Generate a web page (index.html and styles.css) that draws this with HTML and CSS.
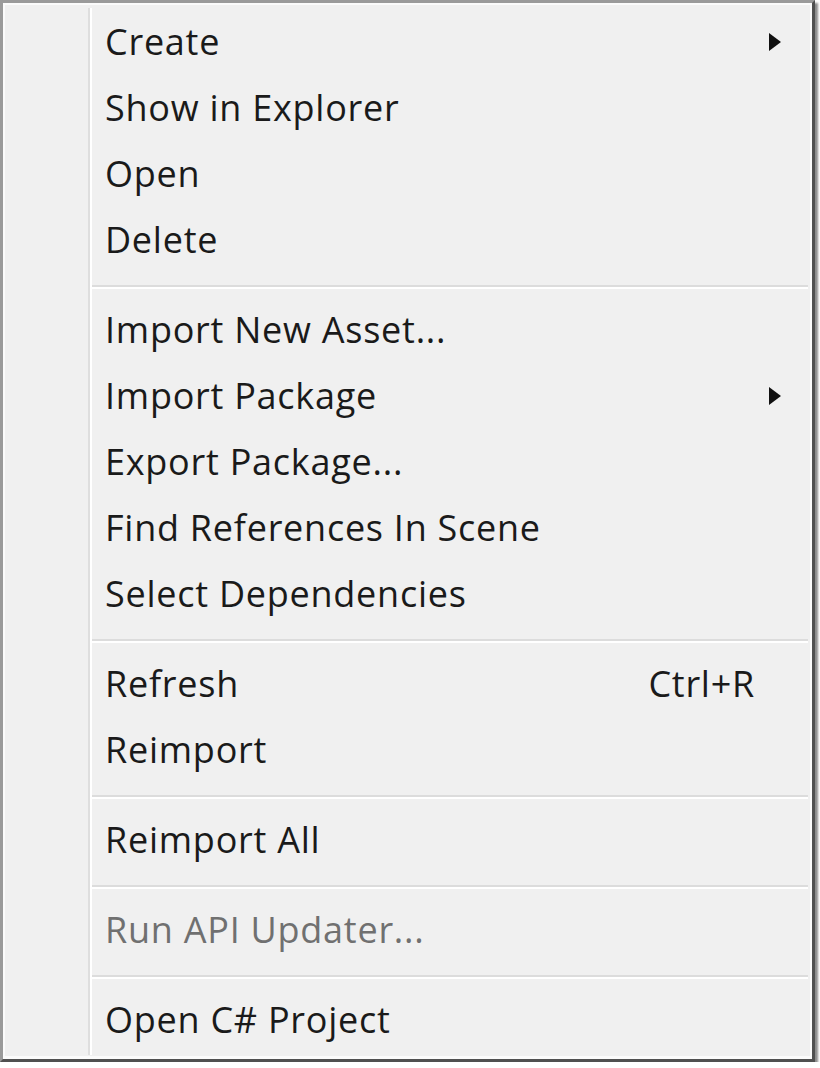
FILE: index.html
```html
<!DOCTYPE html>
<html>
<head>
<meta charset="utf-8">
<link rel="stylesheet" href="styles.css">
</head>
<body>
<div class="menu">
  <div class="inner">
    <div class="gutter"></div>
    <div class="list">
      <div class="row"><span class="label">Create</span><span class="arrow-cell"><span class="arrow"></span></span></div>
      <div class="row"><span class="label">Show in Explorer</span><span class="arrow-cell"></span></div>
      <div class="row"><span class="label">Open</span><span class="arrow-cell"></span></div>
      <div class="row"><span class="label">Delete</span><span class="arrow-cell"></span></div>
      <div class="sep"></div>
      <div class="row"><span class="label">Import New Asset...</span><span class="arrow-cell"></span></div>
      <div class="row"><span class="label">Import Package</span><span class="arrow-cell"><span class="arrow"></span></span></div>
      <div class="row"><span class="label">Export Package...</span><span class="arrow-cell"></span></div>
      <div class="row"><span class="label">Find References In Scene</span><span class="arrow-cell"></span></div>
      <div class="row"><span class="label">Select Dependencies</span><span class="arrow-cell"></span></div>
      <div class="sep"></div>
      <div class="row"><span class="label">Refresh</span><span class="shortcut">Ctrl+R</span><span class="arrow-cell"></span></div>
      <div class="row"><span class="label">Reimport</span><span class="arrow-cell"></span></div>
      <div class="sep"></div>
      <div class="row"><span class="label">Reimport All</span><span class="arrow-cell"></span></div>
      <div class="sep"></div>
      <div class="row disabled"><span class="label">Run API Updater...</span><span class="arrow-cell"></span></div>
      <div class="sep"></div>
      <div class="row"><span class="label">Open C# Project</span><span class="arrow-cell"></span></div>
    </div>
  </div>
</div>
</body>
</html>
```

FILE: styles.css
```css
html, body {
  margin: 0;
  padding: 0;
  background: #ffffff;
}

.menu {
  box-sizing: border-box;
  width: 815px;
  height: 1062px;
  border-style: solid;
  border-width: 3px;
  border-color: #9a9a9a #505050 #505050 #9a9a9a;
  box-shadow: 3px 3px 2px rgba(0, 0, 0, 0.45);
  font-family: "Open Sans", "Noto Sans", sans-serif;
  font-size: 36px;
  letter-spacing: 0.75px;
  color: #1a1a1a;
}

.inner {
  box-sizing: border-box;
  height: 100%;
  display: flex;
  border: 2px solid #fbfbfb;
  border-bottom-width: 3px;
  background: #f0f0f0;
  padding: 3px 0 1px 0;
}

.gutter {
  width: 83px;
  flex: none;
}

.list {
  flex: 1;
  border-left: 2px solid #dedede;
  box-shadow: inset 2px 0 0 #ffffff;
  padding: 1px 0 0 2px;
}

.row {
  display: flex;
  align-items: center;
  height: 66px;
  line-height: 66px;
  padding-left: 13px;
}

.label {
  flex: 1;
  white-space: nowrap;
}

.shortcut {
  margin-right: 7px;
  white-space: nowrap;
}

.arrow-cell {
  width: 48px;
  flex: none;
  display: flex;
  align-items: center;
  height: 100%;
}

.arrow {
  margin-left: 7px;
  width: 0;
  height: 0;
  border-left: 12px solid #111111;
  border-top: 9px solid transparent;
  border-bottom: 9px solid transparent;
}

.disabled {
  color: #707070;
}

.sep {
  height: 2px;
  margin: 12px 2px 8px 0;
  background: #dcdcdc;
  border-bottom: 2px solid #ffffff;
}
```
